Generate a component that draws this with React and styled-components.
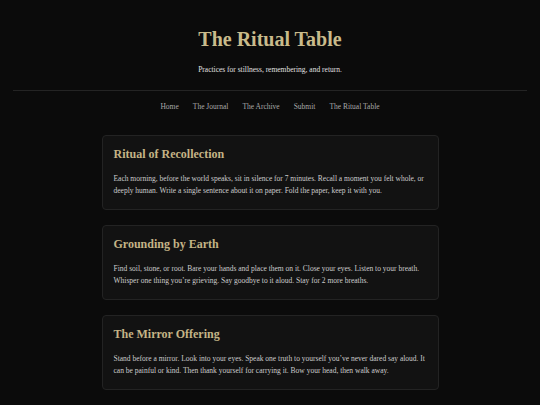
import React from "react";
import styled, { createGlobalStyle } from "styled-components";

const Global = createGlobalStyle`
  html, body { margin: 0; padding: 0; background: #0b0b0b; }
  body { font-family: "Liberation Serif", "DejaVu Serif", Georgia, serif; color: #cfcfcf; }
`;

const Page = styled.div`
  min-height: 405px;
  background: #0b0b0b;
`;

const Header = styled.header`
  margin: 0 13px;
  padding: 27px 0 15px;
  border-bottom: 1px solid #242424;
  text-align: center;
`;

const Title = styled.h1`
  margin: 0;
  font-size: 20px;
  font-weight: bold;
  color: #c9bb8b;
  line-height: 24px;
`;

const Subtitle = styled.p`
  margin: 14px 0 0;
  font-size: 7.5px;
  line-height: 10px;
  color: #e0e0e0;
`;

const Nav = styled.nav`
  display: flex;
  justify-content: center;
  gap: 14px;
  padding: 11px 0 0;
`;

const NavLink = styled.a`
  font-size: 7.5px;
  line-height: 10px;
  color: #a8a8a8;
  text-decoration: none;
`;

const Main = styled.main`
  width: 337px;
  margin: 23px auto 0;
  display: flex;
  flex-direction: column;
  gap: 15px;
`;

const Card = styled.section`
  background: #121212;
  border: 1px solid #232323;
  border-radius: 4px;
  padding: 11px 11px 12px;
`;

const CardTitle = styled.h2`
  margin: 0;
  font-size: 12px;
  line-height: 14px;
  font-weight: bold;
  color: #c4b486;
`;

const CardText = styled.p`
  margin: 12px 0 0;
  font-size: 7.5px;
  line-height: 12px;
  color: #cccccc;
`;

const rituals = [
  {
    title: "Ritual of Recollection",
    text: "Each morning, before the world speaks, sit in silence for 7 minutes. Recall a moment you felt whole, or deeply human. Write a single sentence about it on paper. Fold the paper, keep it with you.",
  },
  {
    title: "Grounding by Earth",
    text: "Find soil, stone, or root. Bare your hands and place them on it. Close your eyes. Listen to your breath. Whisper one thing you’re grieving. Say goodbye to it aloud. Stay for 2 more breaths.",
  },
  {
    title: "The Mirror Offering",
    text: "Stand before a mirror. Look into your eyes. Speak one truth to yourself you’ve never dared say aloud. It can be painful or kind. Then thank yourself for carrying it. Bow your head, then walk away.",
  },
];

export default function App() {
  return (
    <Page>
      <Global />
      <Header>
        <Title>The Ritual Table</Title>
        <Subtitle>Practices for stillness, remembering, and return.</Subtitle>
      </Header>
      <Nav>
        {["Home", "The Journal", "The Archive", "Submit", "The Ritual Table"].map((n) => (
          <NavLink key={n} href="#">{n}</NavLink>
        ))}
      </Nav>
      <Main>
        {rituals.map((r) => (
          <Card key={r.title}>
            <CardTitle>{r.title}</CardTitle>
            <CardText>{r.text}</CardText>
          </Card>
        ))}
      </Main>
    </Page>
  );
}
